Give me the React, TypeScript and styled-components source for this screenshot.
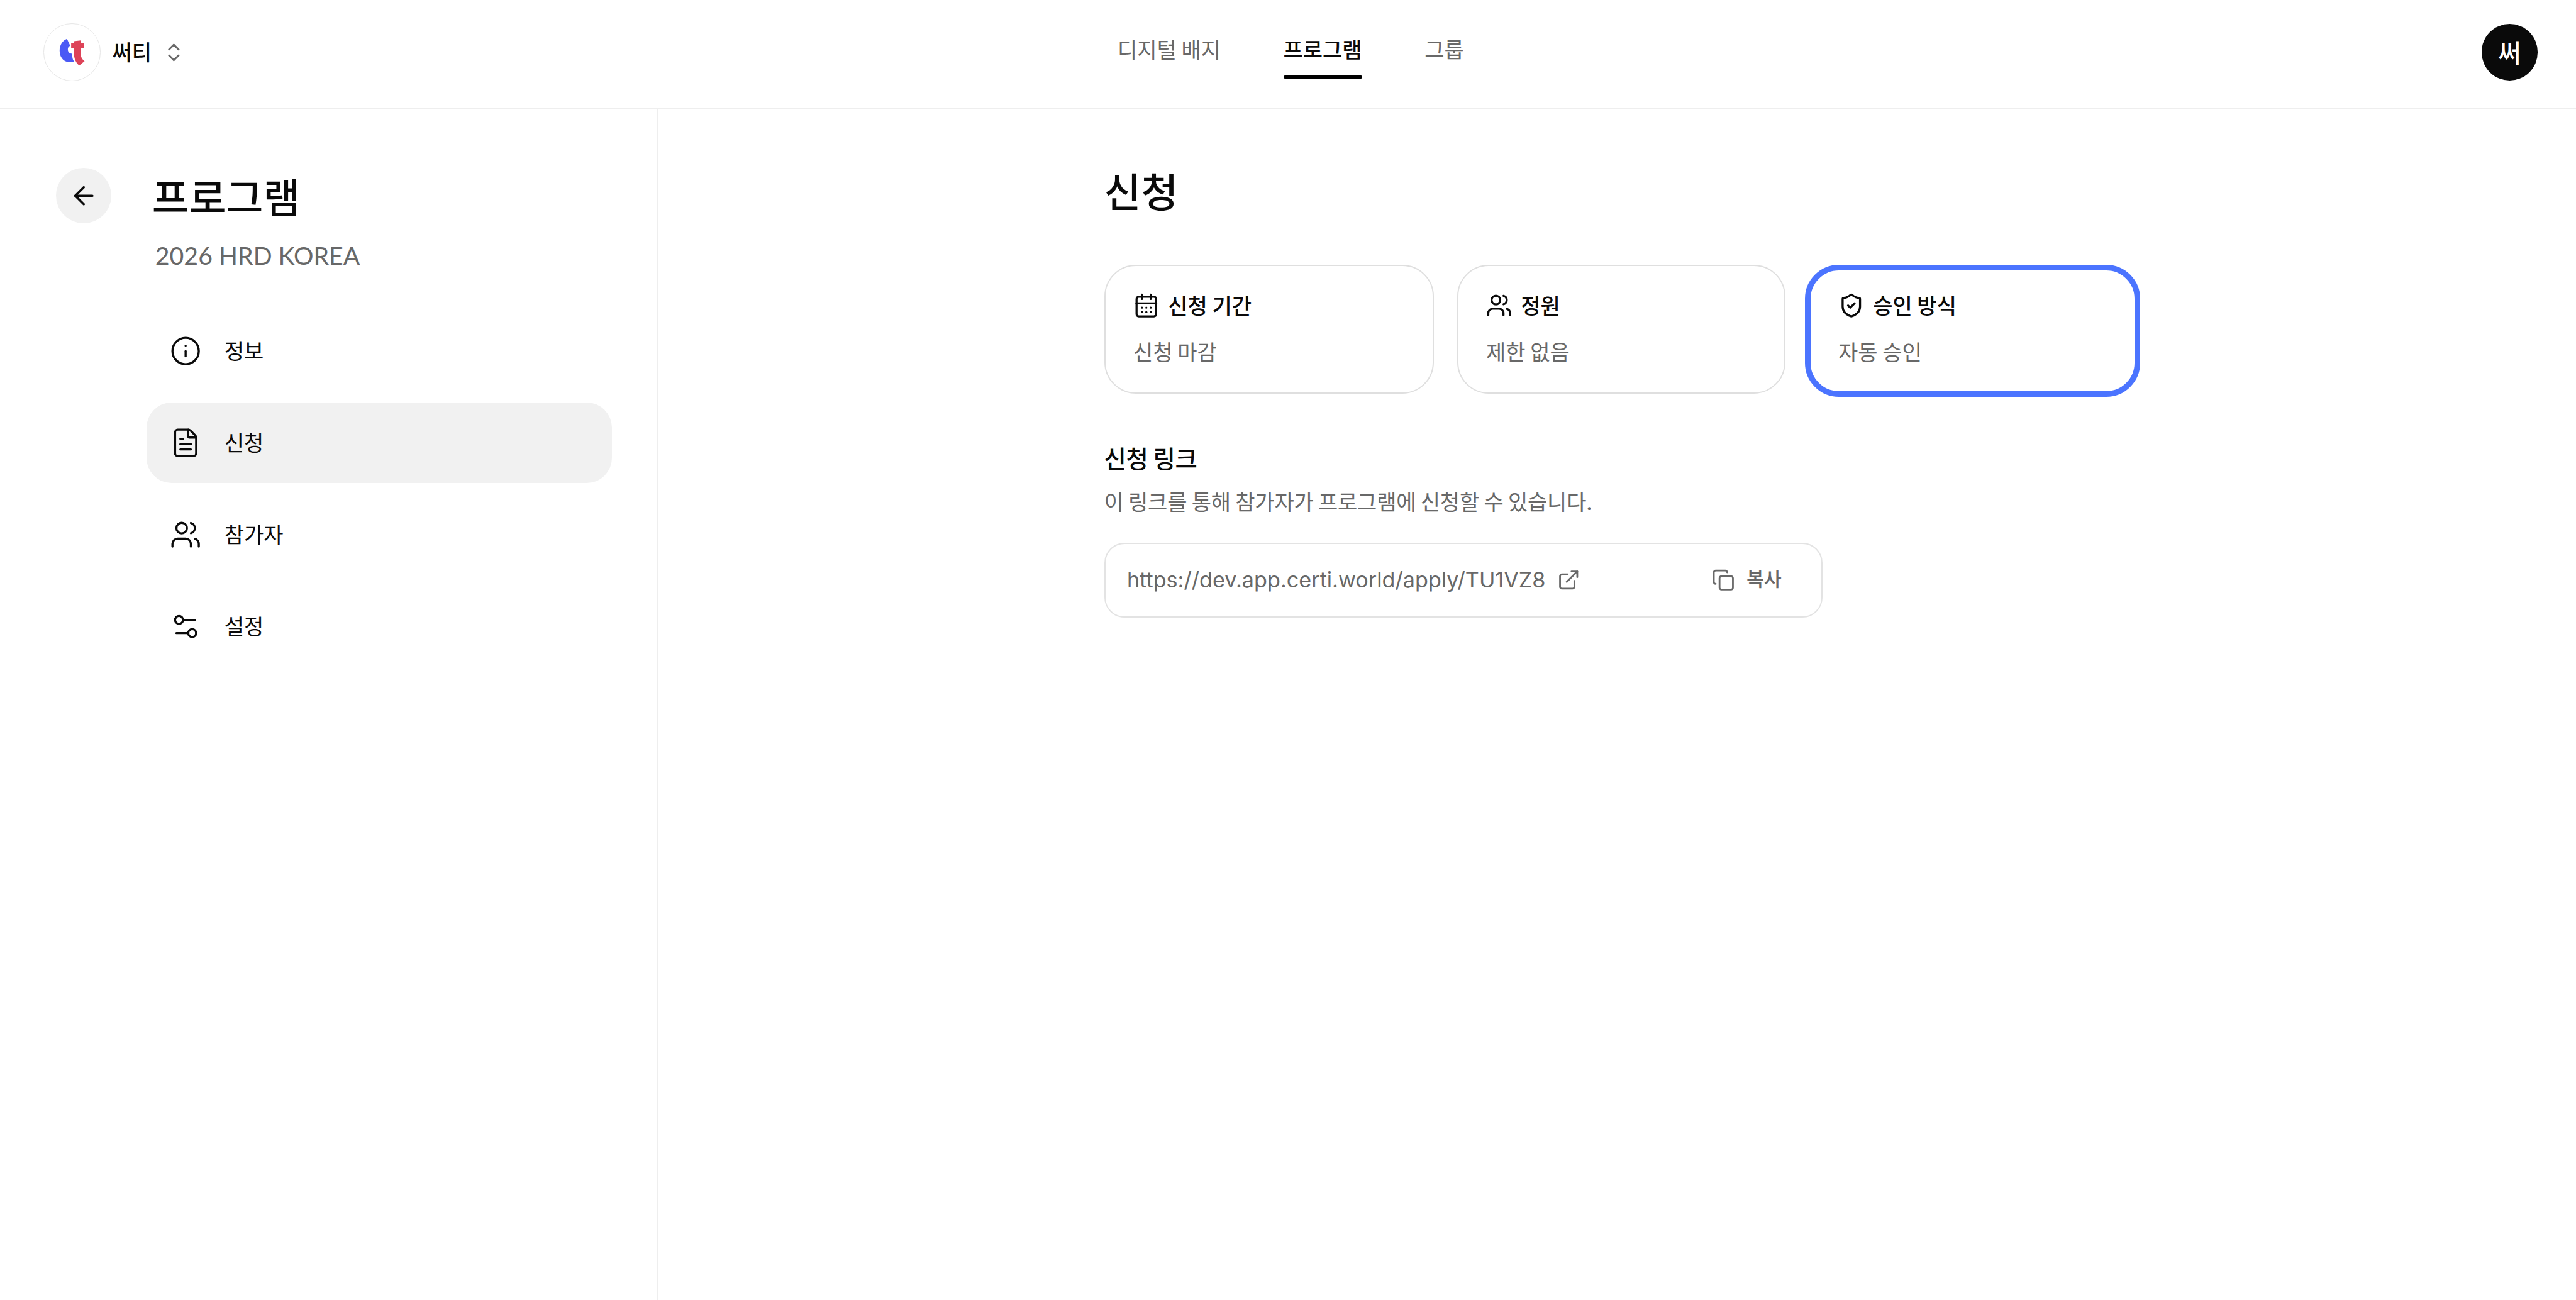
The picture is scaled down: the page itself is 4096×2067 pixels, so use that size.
import React from 'react';
import styled, { createGlobalStyle } from 'styled-components';
import {
  ArrowLeft,
  CalendarDays,
  ChevronsUpDown,
  Copy,
  ExternalLink,
  FileText,
  Info,
  Settings2,
  ShieldCheck,
  Users,
} from 'lucide-react';
import type { LucideIcon } from 'lucide-react';

const color = {
  ink: '#0a0a0a',
  muted: '#686868',
  line: '#eeeeee',
  cardLine: '#dfdfdf',
  fieldLine: '#e3e3e3',
  fill: '#f1f1f1',
  accent: '#4b74ff',
};

const GlobalStyle = createGlobalStyle`
  * { box-sizing: border-box; }
  body {
    margin: 0;
    background: #fff;
    color: ${color.ink};
    font-family: "Noto Sans CJK KR", "Noto Sans", sans-serif;
  }
  h1, h2, p { margin: 0; }
`;

const Page = styled.div`
  display: flex;
  flex-direction: column;
  width: 4096px;
  height: 2067px;
  overflow: hidden;
`;

const Text = styled.span<{ $size?: number; $weight?: number; $muted?: boolean; $track?: number }>`
  display: block;
  padding-top: 1px;
  padding-bottom: calc(0.12em - 1px);
  font-size: ${(p) => p.$size ?? 34}px;
  font-weight: ${(p) => p.$weight ?? 400};
  line-height: 1;
  letter-spacing: ${(p) => p.$track ?? 0}px;
  white-space: nowrap;
  color: ${(p) => (p.$muted ? color.muted : color.ink)};
`;

const Header = styled.header`
  display: flex;
  align-items: center;
  flex: none;
  height: 174px;
  padding: 0 61px 6px 68.6px;
  border-bottom: 2px solid ${color.line};
`;

const Brand = styled.div`
  display: flex;
  align-items: center;
  width: 1708.4px;
`;

const LogoRing = styled.div`
  display: grid;
  place-items: center;
  width: 91.4px;
  height: 91.4px;
  margin-right: 18.6px;
  border: 1px solid #e6e6e6;
  border-radius: 50%;
`;

const BrandToggle = styled(ChevronsUpDown)`
  margin-left: 17.2px;
  color: ${color.muted};
`;

const Tabs = styled.nav`
  display: flex;
  align-self: flex-start;
  gap: 99.5px;
  padding-top: 59.5px;
`;

const Tab = styled.div<{ $active?: boolean }>`
  display: flex;
  flex-direction: column;
  gap: 22px;

  &::after {
    content: '';
    height: 5px;
    border-radius: 2px;
    background: ${(p) => (p.$active ? '#000' : 'transparent')};
  }
`;

const Avatar = styled.div`
  display: grid;
  place-items: center;
  width: 89.3px;
  height: 89.3px;
  margin-left: auto;
  border-radius: 50%;
  background: ${color.ink};

  ${Text} {
    color: #fff;
  }
`;

const Body = styled.div`
  display: flex;
  flex: 1;
`;

const Sidebar = styled.aside`
  flex: none;
  width: 1047px;
  padding: 92.6px 72.4px 0 88.8px;
  border-right: 2px solid ${color.line};
`;

const SideHead = styled.div`
  display: flex;
  align-items: flex-start;
`;

const BackButton = styled.div`
  display: grid;
  place-items: center;
  width: 88.6px;
  height: 88.6px;
  border-radius: 50%;
  background: ${color.fill};
`;

const SideTitles = styled.div`
  padding: 10.3px 0 0 64.4px;
`;

const Subtitle = styled.p`
  margin: 33.3px 0 0 5px;
  font-family: Lato, "Noto Sans", sans-serif;
  font-size: 39.3px;
  line-height: 48px;
  color: ${color.muted};
`;

const SideNav = styled.nav`
  display: flex;
  flex-direction: column;
  gap: 17.8px;
  margin: 63.7px 0 0 144px;
`;

const SideItem = styled.div<{ $active?: boolean }>`
  display: flex;
  align-items: center;
  gap: 36.6px;
  height: 128.4px;
  padding-left: 37.1px;
  border-radius: 40px;
  background: ${(p) => (p.$active ? color.fill : 'transparent')};
`;

const Main = styled.main`
  flex: 1;
  padding: 93.8px 0 0 708.5px;
`;

const Cards = styled.div`
  display: flex;
  align-items: flex-start;
  margin-top: 81.6px;
`;

const Card = styled.section<{ $selected?: boolean; $width: number }>`
  width: ${(p) => p.$width}px;
  height: ${(p) => (p.$selected ? 210 : 204.5)}px;
  margin-left: ${(p) => (p.$selected ? 30.9 : 37.1)}px;
  padding: ${(p) => (p.$selected ? '35px 0 0 43.8px' : '42px 0 0 44.5px')};
  border: ${(p) => (p.$selected ? `9px solid ${color.accent}` : `2px solid ${color.cardLine}`)};
  border-radius: ${(p) => (p.$selected ? 54 : 50)}px;

  &:first-child {
    margin-left: 0;
  }
`;

const CardHead = styled.div`
  display: flex;
  align-items: center;
  gap: 13.7px;
  height: 41.5px;
  margin-bottom: 34px;
`;

const SectionTitle = styled.div`
  margin: 75.8px 0 29.1px;
`;

const LinkField = styled.div`
  display: flex;
  align-items: center;
  width: 1142.5px;
  height: 119.2px;
  margin-top: 45.6px;
  padding: 0 63.2px 0 34.4px;
  border: 2px solid ${color.fieldLine};
  border-radius: 32px;
  color: ${color.muted};
`;

const Url = styled.span`
  margin-right: 18.5px;
  font-family: Inter, "Noto Sans", sans-serif;
  font-size: 34.2px;
  line-height: 42px;
  white-space: nowrap;
`;

const CopyButton = styled.div`
  display: flex;
  align-items: center;
  gap: 18.3px;
  margin-left: auto;

  ${Text} {
    margin-bottom: 4px;
  }
`;

function Logo() {
  return (
    <svg width="57.1" height="57.1" viewBox="0 0 240 240">
      <path
        fill="#4a59f5"
        d="M86 33 108 79C96 84 91 94 92 106 93 121 105 132 121 132L122 152C123 166 127 176 134 184 120 189 106 190 92 187 58 181 37 150 37 112 37 75 57 43 86 33Z"
      />
      <path
        fill="#dd4358"
        d="M133 48 178 43V63H199V96H178V130C178 152 186 168 204 182L168 211C143 190 133 160 133 130V96H114V63H133Z"
      />
    </svg>
  );
}

const tabs = ['디지털 배지', '프로그램', '그룹'];

const menu: { label: string; icon: LucideIcon }[] = [
  { label: '정보', icon: Info },
  { label: '신청', icon: FileText },
  { label: '참가자', icon: Users },
  { label: '설정', icon: Settings2 },
];

const cards: { title: string; value: string; icon: LucideIcon; width: number; selected?: boolean }[] = [
  { title: '신청 기간', value: '신청 마감', icon: CalendarDays, width: 524 },
  { title: '정원', value: '제한 없음', icon: Users, width: 522.7 },
  { title: '승인 방식', value: '자동 승인', icon: ShieldCheck, width: 532.9, selected: true },
];

export default function App() {
  return (
    <Page>
      <GlobalStyle />
      <Header>
        <Brand>
          <LogoRing>
            <Logo />
          </LogoRing>
          <Text $weight={500}>써티</Text>
          <BrandToggle size={36.8} strokeWidth={1.9} />
        </Brand>
        <Tabs>
          {tabs.map((label) => {
            const active = label === '프로그램';
            return (
              <Tab key={label} $active={active}>
                <Text $weight={active ? 500 : 400} $muted={!active}>
                  {label}
                </Text>
              </Tab>
            );
          })}
        </Tabs>
        <Avatar>
          <Text $size={40} $weight={500}>
            써
          </Text>
        </Avatar>
      </Header>
      <Body>
        <Sidebar>
          <SideHead>
            <BackButton>
              <ArrowLeft size={46.5} strokeWidth={1.9} />
            </BackButton>
            <SideTitles>
              <Text as="h1" $size={64} $weight={500}>
                프로그램
              </Text>
              <Subtitle>2026 HRD KOREA</Subtitle>
            </SideTitles>
          </SideHead>
          <SideNav>
            {menu.map(({ label, icon: Icon }) => (
              <SideItem key={label} $active={label === '신청'}>
                <Icon size={50.3} strokeWidth={1.6} />
                <Text>{label}</Text>
              </SideItem>
            ))}
          </SideNav>
        </Sidebar>
        <Main>
          <Text as="h2" $size={64} $weight={500}>
            신청
          </Text>
          <Cards>
            {cards.map(({ title, value, icon: Icon, width, selected }) => (
              <Card key={title} $width={width} $selected={selected}>
                <CardHead>
                  <Icon size={41.5} strokeWidth={1.9} />
                  <Text $weight={500}>{title}</Text>
                </CardHead>
                <Text $muted>{value}</Text>
              </Card>
            ))}
          </Cards>
          <SectionTitle>
            <Text $size={38.4} $weight={500} $track={-0.4}>
              신청 링크
            </Text>
          </SectionTitle>
          <Text $muted $track={-0.2}>
            이 링크를 통해 참가자가 프로그램에 신청할 수 있습니다.
          </Text>
          <LinkField>
            <Url>https://dev.app.certi.world/apply/TU1VZ8</Url>
            <ExternalLink size={36.5} strokeWidth={1.85} />
            <CopyButton>
              <Copy size={36.5} strokeWidth={1.85} />
              <Text $size={30.4} $weight={500} $muted>
                복사
              </Text>
            </CopyButton>
          </LinkField>
        </Main>
      </Body>
    </Page>
  );
}
